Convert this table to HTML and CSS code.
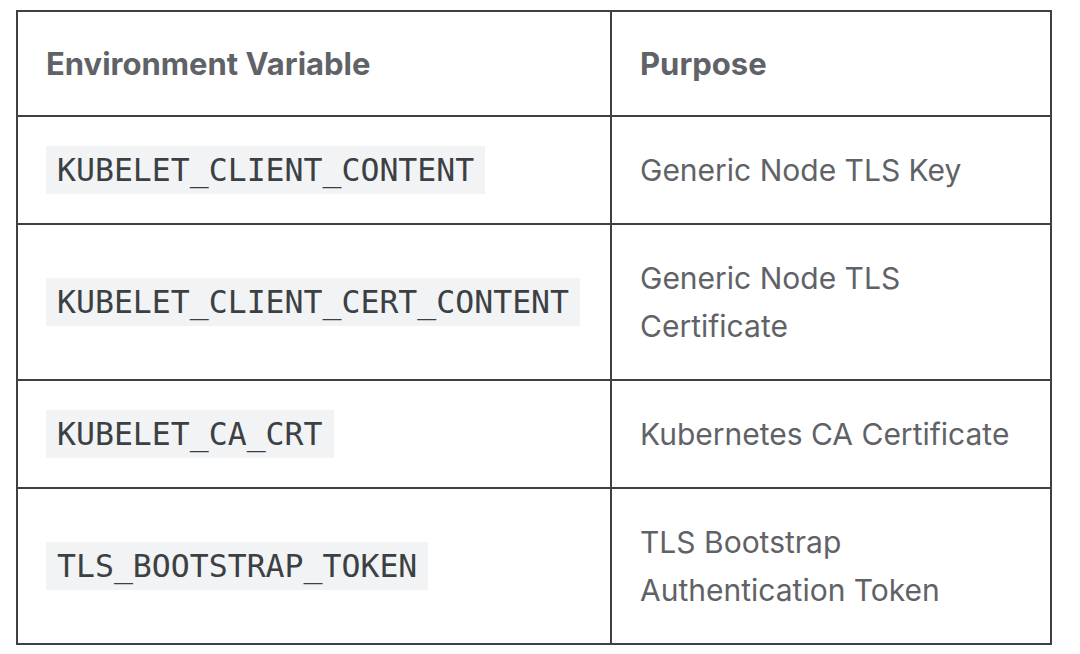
FILE: index.html
```html
<!DOCTYPE html>
<html>
<head>
<meta charset="utf-8">
<link rel="stylesheet" href="styles.css">
</head>
<body>
<table class="env-table">
  <colgroup><col class="col-var"><col class="col-purpose"></colgroup>
  <thead>
    <tr><th>Environment Variable</th><th>Purpose</th></tr>
  </thead>
  <tbody>
    <tr><td><code>KUBELET_CLIENT_CONTENT</code></td><td>Generic Node TLS Key</td></tr>
    <tr><td><code>KUBELET_CLIENT_CERT_CONTENT</code></td><td>Generic Node TLS<br>Certificate</td></tr>
    <tr><td><code>KUBELET_CA_CRT</code></td><td>Kubernetes CA Certificate</td></tr>
    <tr><td><code>TLS_BOOTSTRAP_TOKEN</code></td><td>TLS Bootstrap<br>Authentication Token</td></tr>
  </tbody>
</table>
</body>
</html>
```

FILE: styles.css
```css
html, body {
  margin: 0;
  padding: 0;
  background: #ffffff;
}
body {
  padding: 10px 0 0 16px;
  font-family: Inter, "Noto Sans", sans-serif;
}
.env-table {
  border-collapse: collapse;
  width: 1036px;
  table-layout: fixed;
  color: #5f6368;
}
.col-var { width: 594px; }
.env-table th,
.env-table td {
  border: 2px solid #404040;
  text-align: left;
  vertical-align: middle;
}
.env-table th {
  font-weight: 700;
  font-size: 31px;
  line-height: 46px;
  padding: 29px 29px 28px 28px;
  color: #5f6368;
}
.env-table td {
  font-weight: 400;
  font-size: 30px;
  line-height: 48px;
  padding: 29px 29px 29px 28px;
}
.env-table code {
  font-family: "DejaVu Sans Mono", monospace;
  font-size: 31.5px;
  line-height: 36px;
  color: #3c4043;
  background: #f1f3f4;
  padding: 6px 11px;
}
```
